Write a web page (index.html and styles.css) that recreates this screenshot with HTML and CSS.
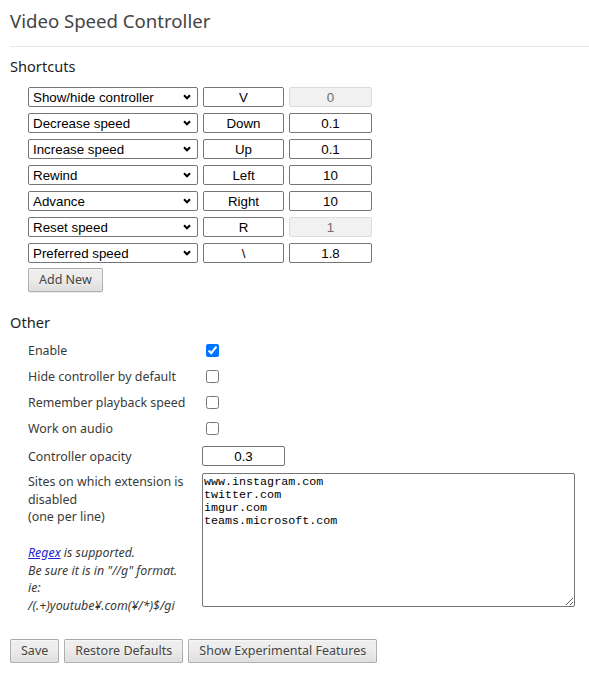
FILE: index.html
```html
<!DOCTYPE html>
<html lang="en">

<head>
    <meta charset="UTF-8">
    <meta name="viewport" content="width=device-width, initial-scale=1.0">
    <title>Video Speed Controller: Options</title>
    <link rel="stylesheet" href="styles.css">
</head>

<body>
    <header>
        <h1>Video Speed Controller</h1>
    </header>

    <section id="customs">
        <h3>Shortcuts</h3>
        <div class="customs-list">
            <div class="row customs">
                <select class="customDo">
                    <option selected>Show/hide controller</option>
                </select>
                <input class="customKey" type="text" value="V">
                <input class="customValue" type="text" value="0" disabled>
            </div>
            <div class="row customs">
                <select class="customDo">
                    <option selected>Decrease speed</option>
                </select>
                <input class="customKey" type="text" value="Down">
                <input class="customValue" type="text" value="0.1">
            </div>
            <div class="row customs">
                <select class="customDo">
                    <option selected>Increase speed</option>
                </select>
                <input class="customKey" type="text" value="Up">
                <input class="customValue" type="text" value="0.1">
            </div>
            <div class="row customs">
                <select class="customDo">
                    <option selected>Rewind</option>
                </select>
                <input class="customKey" type="text" value="Left">
                <input class="customValue" type="text" value="10">
            </div>
            <div class="row customs">
                <select class="customDo">
                    <option selected>Advance</option>
                </select>
                <input class="customKey" type="text" value="Right">
                <input class="customValue" type="text" value="10">
            </div>
            <div class="row customs">
                <select class="customDo">
                    <option selected>Reset speed</option>
                </select>
                <input class="customKey" type="text" value="R">
                <input class="customValue" type="text" value="1" disabled>
            </div>
            <div class="row customs">
                <select class="customDo">
                    <option selected>Preferred speed</option>
                </select>
                <input class="customKey" type="text" value="\">
                <input class="customValue" type="text" value="1.8">
            </div>
        </div>
        <button id="add">Add New</button>
    </section>

    <section id="other">
        <h3>Other</h3>
        <div class="option">
            <label for="enabled">Enable</label>
            <input id="enabled" type="checkbox" checked>
        </div>
        <div class="option">
            <label for="startHidden">Hide controller by default</label>
            <input id="startHidden" type="checkbox">
        </div>
        <div class="option">
            <label for="rememberSpeed">Remember playback speed</label>
            <input id="rememberSpeed" type="checkbox">
        </div>
        <div class="option">
            <label for="audioBoolean">Work on audio</label>
            <input id="audioBoolean" type="checkbox">
        </div>
        <div class="option opacity">
            <label for="controllerOpacity">Controller opacity</label>
            <input id="controllerOpacity" class="customValue" type="text" value="0.3">
        </div>
        <div class="option sites">
            <label for="blacklist">Sites on which extension is<br>
                disabled<br>
                (one per line)<br>
                <br>
                <em><a href="#">Regex</a> is supported.<br>
                    Be sure it is in "//g" format.<br>
                    ie:<br>
                    /(.+)youtube¥.com(¥/*)$/gi</em>
            </label>
            <textarea id="blacklist">www.instagram.com
twitter.com
imgur.com
teams.microsoft.com</textarea>
        </div>
    </section>

    <div class="actions">
        <button id="save">Save</button>
        <button id="restore">Restore Defaults</button>
        <button id="experimental">Show Experimental Features</button>
    </div>
</body>

</html>
```

FILE: styles.css
```css
body {
    margin: 0;
    padding-left: 10px;
    font-family: "Noto Sans", "Noto Sans CJK JP", sans-serif;
    font-size: 12.4px;
    color: #3a3a3a;
}

header {
    box-sizing: border-box;
    height: 47px;
    padding-top: 11px;
    border-bottom: 1px solid #e8e8e8;
}

h1 {
    margin: 0;
    font-size: 18.6px;
    font-weight: normal;
    line-height: 20px;
    color: #444;
}

h3 {
    margin: 0;
    font-size: 14.6px;
    font-weight: normal;
    line-height: 20px;
    color: #222;
}

#customs h3 {
    margin: 9px 0 11px;
}

.customs-list {
    display: flex;
    flex-direction: column;
    gap: 6px;
    padding-left: 18px;
}

.customs {
    display: flex;
    gap: 5px;
}

select,
input[type="text"] {
    box-sizing: border-box;
    height: 20px;
    margin: 0;
    border: 1px solid #767676;
    border-radius: 2px;
    background-color: #fff;
    font-family: "Liberation Sans", Arial, sans-serif;
    font-size: 13.33px;
    color: #000;
}

select {
    width: 170px;
    padding: 0 0 0 4px;
    appearance: none;
    background-image: url("data:image/svg+xml,%3Csvg xmlns='http://www.w3.org/2000/svg' width='8' height='6' viewBox='0 0 8 6'%3E%3Cpath d='M1 1.3L4 4.3L7 1.3' fill='none' stroke='%23000' stroke-width='2'/%3E%3C/svg%3E");
    background-repeat: no-repeat;
    background-position: right 6px center;
}

input[type="text"] {
    padding: 0;
    text-align: center;
}

.customKey {
    width: 81px;
}

.customValue {
    width: 83px;
}

input[type="text"]:disabled {
    background-color: #f1f1f1;
    border-color: #dcdcdc;
    color: #6d6d6d;
}

button {
    box-sizing: border-box;
    height: 24px;
    margin: 0;
    padding: 0 10px;
    border: 1px solid rgba(0, 0, 0, 0.25);
    border-radius: 2px;
    background-image: linear-gradient(#ededed, #ededed 38%, #dedede);
    box-shadow: 0 1px 0 rgba(0, 0, 0, 0.08), inset 0 1px 2px rgba(255, 255, 255, 0.75);
    font-family: inherit;
    font-size: 12.5px;
    line-height: 20px;
    color: #444;
    text-shadow: 0 1px 0 #f0f0f0;
}

#add {
    margin: 5px 0 0 18px;
}

#other h3 {
    margin: 20px 0 5px;
}

.option {
    display: flex;
    align-items: center;
    height: 26px;
    padding-left: 18px;
}

.option label {
    width: 174px;
    flex-shrink: 0;
}

.option input[type="checkbox"] {
    width: 13px;
    height: 13px;
    margin: 0 0 0 4px;
}

.opacity {
    margin-top: 2px;
}

.sites {
    align-items: flex-start;
    height: auto;
    margin-top: 4px;
}

.sites label {
    line-height: 17.7px;
    white-space: nowrap;
}

.sites a {
    color: #2323d6;
}

textarea {
    box-sizing: border-box;
    width: 373px;
    height: 134px;
    margin: 0;
    padding: 2px 1px;
    border: 1px solid #767676;
    border-radius: 2px;
    font-family: "Liberation Mono", monospace;
    font-size: 11.7px;
    line-height: 13px;
    color: #000;
    resize: both;
}

.actions {
    display: flex;
    gap: 5px;
    margin-top: 24px;
}
```
